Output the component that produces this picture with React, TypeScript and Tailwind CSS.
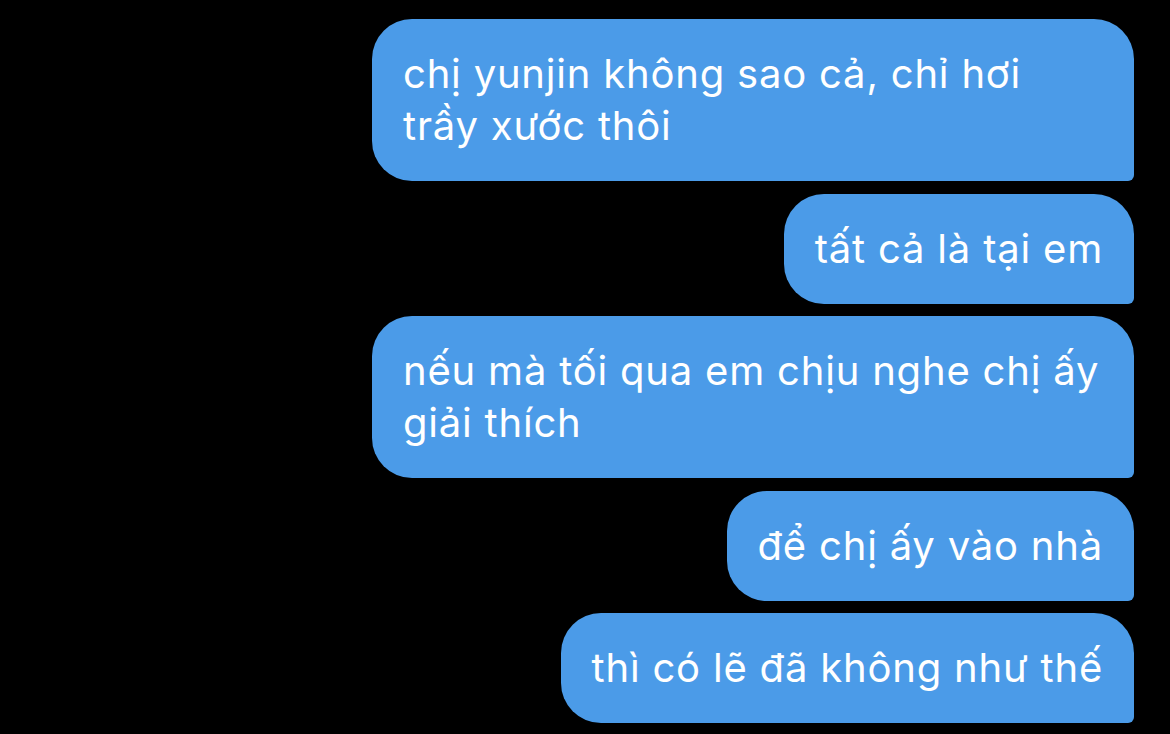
const messages = [
  "chị yunjin không sao cả, chỉ hơi trầy xước thôi",
  "tất cả là tại em",
  "nếu mà tối qua em chịu nghe chị ấy giải thích",
  "để chị ấy vào nhà",
  "thì có lẽ đã không như thế",
];

export default function App() {
  return (
    <main className="min-h-screen w-full bg-black font-['Inter','Noto_Sans',sans-serif]">
      <div className="flex flex-col items-end gap-[12.5px] pt-[19px] pr-[36px]">
        {messages.map((text, i) => (
          <div
            key={i}
            className="max-w-[762px] rounded-[40px] rounded-br-[6px] bg-[#4b9be8] px-[31px] py-[29px] text-[40px] leading-[52px] tracking-[0.8px] text-white"
          >
            {text}
          </div>
        ))}
      </div>
    </main>
  );
}
